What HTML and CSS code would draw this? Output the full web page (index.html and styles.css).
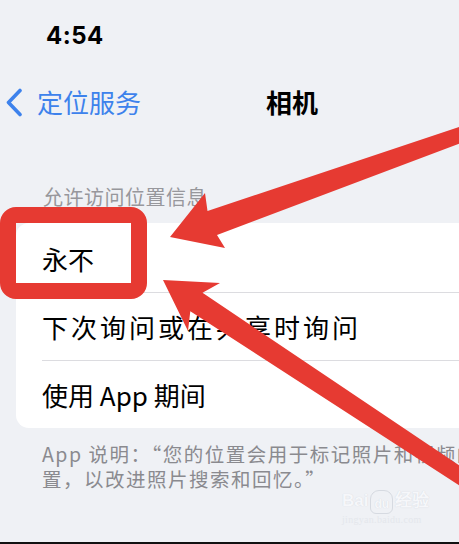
FILE: index.html
```html
<!DOCTYPE html>
<html lang="zh-CN">

<head>
    <meta charset="UTF-8">
    <meta name="viewport" content="width=device-width, initial-scale=1.0">
    <title>相机 - 定位服务</title>
    <link rel="stylesheet" href="styles.css">
</head>

<body>
    <div class="screen">
        <div class="status_bar">
            <span class="time">4:54</span>
        </div>
        <div class="nav_bar">
            <a class="back_btn">
                <svg class="back_icon" width="18" height="29" viewBox="0 0 18 29">
                    <path d="M15 2.5 L3.5 14.5 L15 26.5" fill="none" stroke="#3d82ec" stroke-width="3.6" stroke-linecap="round" stroke-linejoin="round"/>
                </svg>
                <span>定位服务</span>
            </a>
            <h1 class="nav_title">相机</h1>
            <span></span>
        </div>

        <p class="group_title">允许访问位置信息</p>
        <ul class="option_list">
            <li>永不</li>
            <li class="wide">下次询问或在共享时询问</li>
            <li>使用 App 期间</li>
        </ul>
        <p class="group_note">App 说明：“您的位置会用于标记照片和视频的位<br>置，以改进照片搜索和回忆。”</p>

        <!-- 水印 -->
        <div class="watermark">
            <div class="wm_logo">Bai<span class="wm_paw">du</span>经验</div>
            <div class="wm_url">jingyan.baidu.com</div>
        </div>

        <!-- 红框和箭头标注 -->
        <div class="mark_box"></div>
        <svg class="mark_arrows" width="584" height="544" viewBox="0 0 584 544">
            <polygon fill="#e63a32" points="170,237 205,193 207.5,211 478.7,120.4 483.7,134.5 217,235 225,248"/>
            <polygon fill="#e63a32" points="163,280 220,283 202.5,292.8 501.4,493.7 492.6,507.1 190.3,311.2 188,331"/>
        </svg>
    </div>
</body>

</html>
```

FILE: styles.css
```css
* {
    margin: 0;
    padding: 0;
    box-sizing: border-box;
}

html,
body {
    width: 100%;
    height: 100%;
    overflow: hidden;
    background-color: #eff1f5;
}

.screen {
    position: relative;
    width: 584px;
    height: 544px;
    border-bottom: 2px solid #111;
    font-family: "Noto Sans CJK SC", "Noto Sans", sans-serif;
    color: #000;
}

.status_bar {
    padding-top: 24px;
    padding-left: 46px;
    height: 48px;
}

.time {
    font-family: Inter, "Liberation Sans", sans-serif;
    font-weight: 700;
    font-size: 24px;
    line-height: 24px;
    letter-spacing: 0.5px;
}

.nav_bar {
    margin-top: 37px;
    height: 34px;
    display: grid;
    grid-template-columns: 1fr auto 1fr;
    align-items: center;
}

.back_btn {
    display: flex;
    align-items: center;
    padding-left: 5px;
    color: #3d82ec;
    font-size: 26px;
    line-height: 34px;
}

.back_icon {
    margin-right: 14px;
}

.nav_title {
    font-size: 26px;
    font-weight: 700;
    line-height: 34px;
}

.group_title {
    margin-top: 65px;
    padding-left: 43px;
    font-size: 20px;
    line-height: 26px;
    letter-spacing: 0.5px;
    color: #97979c;
}

.option_list {
    list-style: none;
    margin: 13px 16px 0;
    padding-top: 1px;
    background-color: #fff;
    border-radius: 13px;
}

.option_list li {
    margin-left: 26px;
    height: 68px;
    display: flex;
    align-items: center;
    font-size: 26px;
}

.option_list li + li {
    border-top: 1px solid #dcdce0;
}

.option_list .wide {
    letter-spacing: 3px;
}

.group_note {
    margin-top: 13px;
    padding-left: 42px;
    font-size: 19.5px;
    line-height: 25px;
    letter-spacing: 1.5px;
    color: #8a8a8f;
    white-space: nowrap;
}

.watermark {
    position: absolute;
    left: 342px;
    top: 488px;
    color: #f6f7fa;
    text-shadow: 0 0 1px #cfd3db;
}

.wm_logo {
    display: flex;
    align-items: flex-end;
    font-family: "Liberation Sans", sans-serif;
    font-weight: 700;
    font-size: 17px;
    line-height: 26px;
}

.wm_paw {
    display: inline-block;
    margin: 0 2px;
    padding: 4px 3px 0;
    font-size: 12px;
    line-height: 18px;
    border: 1px solid #d6dae1;
    border-radius: 9px 9px 6px 6px;
}

.wm_url {
    font-family: "Liberation Serif", serif;
    font-size: 10px;
    line-height: 12px;
    letter-spacing: 0.3px;
    color: #e4e7ec;
    text-shadow: none;
}

.mark_box {
    position: absolute;
    left: 0;
    top: 207px;
    width: 147px;
    height: 92px;
    border: 16px solid #e63a32;
    border-radius: 16px;
}

.mark_arrows {
    position: absolute;
    left: 0;
    top: 0;
}
```
